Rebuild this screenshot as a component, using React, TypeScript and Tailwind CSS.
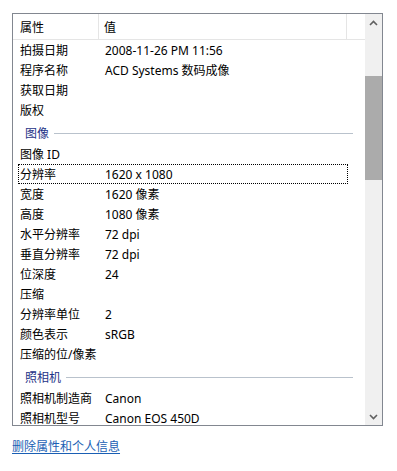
import type { ReactNode } from "react";

type Row =
  | { kind: "item"; name: string; value?: string; focused?: boolean }
  | { kind: "group"; name: string };

const rows: Row[] = [
  { kind: "item", name: "拍摄日期", value: "2008-11-26 PM 11:56" },
  { kind: "item", name: "程序名称", value: "ACD Systems 数码成像" },
  { kind: "item", name: "获取日期" },
  { kind: "item", name: "版权" },
  { kind: "group", name: "图像" },
  { kind: "item", name: "图像 ID" },
  { kind: "item", name: "分辨率", value: "1620 x 1080", focused: true },
  { kind: "item", name: "宽度", value: "1620 像素" },
  { kind: "item", name: "高度", value: "1080 像素" },
  { kind: "item", name: "水平分辨率", value: "72 dpi" },
  { kind: "item", name: "垂直分辨率", value: "72 dpi" },
  { kind: "item", name: "位深度", value: "24" },
  { kind: "item", name: "压缩" },
  { kind: "item", name: "分辨率单位", value: "2" },
  { kind: "item", name: "颜色表示", value: "sRGB" },
  { kind: "item", name: "压缩的位/像素" },
  { kind: "group", name: "照相机" },
  { kind: "item", name: "照相机制造商", value: "Canon" },
  { kind: "item", name: "照相机型号", value: "Canon EOS 450D" },
];

function ItemRow({ name, value, focused }: { name: string; value?: string; focused?: boolean }) {
  return (
    <div className="flex h-[20px] shrink-0 items-center">
      <div
        className={
          "ml-[5px] flex h-[20px] w-[330px] items-center border pt-[2px] " +
          (focused ? "border-dotted border-black" : "border-transparent")
        }
      >
        <span className="w-[86px] shrink-0 whitespace-nowrap pl-[1px]">{name}</span>
        <span className="whitespace-nowrap">{value}</span>
      </div>
    </div>
  );
}

function GroupRow({ name }: { name: string }) {
  return (
    <div className="flex h-[24px] w-[340px] shrink-0 items-center pl-[12px]">
      <span className="whitespace-nowrap pt-[3px] text-[#1e3287]">{name}</span>
      <div className="ml-[5px] mt-[2px] h-px flex-1 bg-[#b9c2cc]" />
    </div>
  );
}

function Arrow({ dir }: { dir: "up" | "down" }): ReactNode {
  return (
    <svg width="9" height="6" viewBox="0 0 9 6" fill="none">
      <polyline
        points={dir === "up" ? "1,5 4.5,1.5 8,5" : "1,1 4.5,4.5 8,1"}
        stroke="#606060"
        strokeWidth="1.6"
      />
    </svg>
  );
}

export default function App() {
  return (
    <div className="h-[471px] w-[397px] bg-white text-[12px] leading-none text-black font-['Noto_Sans','Noto_Sans_CJK_SC',sans-serif]">
      <div className="px-[12px] pt-[13px]">
        <div className="flex h-[413px] w-[371px] border border-[#828790]">
          <div className="flex min-w-0 flex-1 flex-col overflow-hidden">
            <div className="flex h-[26px] shrink-0 border-b border-[#e5e5e5]">
              <div className="flex w-[86px] items-center border-r border-[#e5e5e5] pl-[7px] pt-[2px]">属性</div>
              <div className="flex w-[248px] items-center border-r border-[#e5e5e5] pl-[5px] pt-[2px]">值</div>
              <div className="flex-1" />
            </div>
            {rows.map((r, i) =>
              r.kind === "group" ? (
                <GroupRow key={i} name={r.name} />
              ) : (
                <ItemRow key={i} name={r.name} value={r.value} focused={r.focused} />
              )
            )}
          </div>
          <div className="flex w-[17px] shrink-0 flex-col bg-[#f0f0f0]">
            <div className="flex h-[17px] items-center justify-center">
              <Arrow dir="up" />
            </div>
            <div className="mt-[45px] h-[104px] w-full bg-[#ababab]" />
            <div className="flex-1" />
            <div className="flex h-[17px] items-center justify-center">
              <Arrow dir="down" />
            </div>
          </div>
        </div>
        <div className="mt-[15px]">
          <a href="#" className="text-[12px] text-[#1a5fb4] underline underline-offset-2">
            删除属性和个人信息
          </a>
        </div>
      </div>
    </div>
  );
}
